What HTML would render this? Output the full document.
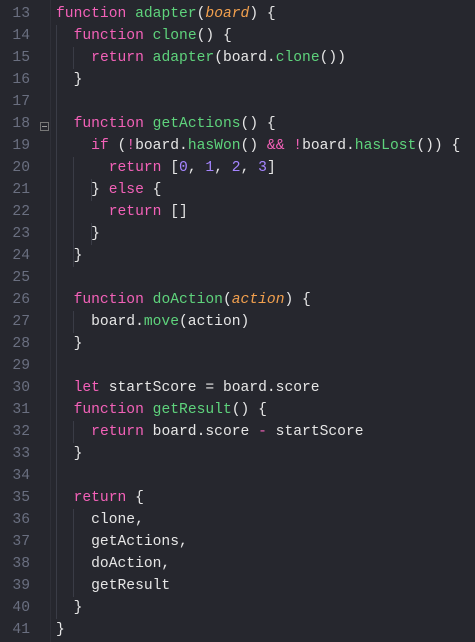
<!DOCTYPE html>
<html><head><style>
body{margin:0;background:#26272e;width:475px;height:642px;overflow:hidden;position:relative;font-family:"Liberation Mono",monospace;font-size:14.65px;color:#e6e6e6}
.l{position:absolute;left:0;height:22px;line-height:22px;white-space:pre}
.n{position:absolute;left:0;width:30px;text-align:right;color:#6a6f80}
.c{position:absolute;left:56px}
.g{position:absolute;width:1px;background:#3a3c46}
.k{color:#f361b8}.f{color:#5ed37c}.p{color:#f2a04e;font-style:italic}.d{color:#a585ff}
.fold{position:absolute;left:40px;top:122px;width:7px;height:7px;border:1px solid #777;font-size:0}
.fold:after{content:"";position:absolute;left:1px;top:3px;width:5px;height:1px;background:#999}
</style></head><body>
<div class="g" style="left:50px;top:0;height:642px;background:#2f3038"></div>
<div class="g" style="left:56px;top:25px;height:594px"></div>
<div class="g" style="left:73px;top:47px;height:22px"></div>
<div class="g" style="left:73px;top:157px;height:110px"></div>
<div class="g" style="left:91px;top:179px;height:22px"></div>
<div class="g" style="left:91px;top:223px;height:22px"></div>
<div class="g" style="left:73px;top:311px;height:22px"></div>
<div class="g" style="left:73px;top:421px;height:22px"></div>
<div class="g" style="left:73px;top:509px;height:88px"></div>
<div class="fold"></div>
<div class="l" style="top:3px"><span class="n">13</span><span class="c"><span class="k">function</span> <span class="f">adapter</span>(<span class="p">board</span>) {</span></div>
<div class="l" style="top:25px"><span class="n">14</span><span class="c">  <span class="k">function</span> <span class="f">clone</span>() {</span></div>
<div class="l" style="top:47px"><span class="n">15</span><span class="c">    <span class="k">return</span> <span class="f">adapter</span>(board.<span class="f">clone</span>())</span></div>
<div class="l" style="top:69px"><span class="n">16</span><span class="c">  }</span></div>
<div class="l" style="top:91px"><span class="n">17</span></div>
<div class="l" style="top:113px"><span class="n">18</span><span class="c">  <span class="k">function</span> <span class="f">getActions</span>() {</span></div>
<div class="l" style="top:135px"><span class="n">19</span><span class="c">    <span class="k">if</span> (<span class="k">!</span>board.<span class="f">hasWon</span>() <span class="k">&amp;&amp;</span> <span class="k">!</span>board.<span class="f">hasLost</span>()) {</span></div>
<div class="l" style="top:157px"><span class="n">20</span><span class="c">      <span class="k">return</span> [<span class="d">0</span>, <span class="d">1</span>, <span class="d">2</span>, <span class="d">3</span>]</span></div>
<div class="l" style="top:179px"><span class="n">21</span><span class="c">    } <span class="k">else</span> {</span></div>
<div class="l" style="top:201px"><span class="n">22</span><span class="c">      <span class="k">return</span> []</span></div>
<div class="l" style="top:223px"><span class="n">23</span><span class="c">    }</span></div>
<div class="l" style="top:245px"><span class="n">24</span><span class="c">  }</span></div>
<div class="l" style="top:267px"><span class="n">25</span></div>
<div class="l" style="top:289px"><span class="n">26</span><span class="c">  <span class="k">function</span> <span class="f">doAction</span>(<span class="p">action</span>) {</span></div>
<div class="l" style="top:311px"><span class="n">27</span><span class="c">    board.<span class="f">move</span>(action)</span></div>
<div class="l" style="top:333px"><span class="n">28</span><span class="c">  }</span></div>
<div class="l" style="top:355px"><span class="n">29</span></div>
<div class="l" style="top:377px"><span class="n">30</span><span class="c">  <span class="k">let</span> startScore = board.score</span></div>
<div class="l" style="top:399px"><span class="n">31</span><span class="c">  <span class="k">function</span> <span class="f">getResult</span>() {</span></div>
<div class="l" style="top:421px"><span class="n">32</span><span class="c">    <span class="k">return</span> board.score <span class="k">-</span> startScore</span></div>
<div class="l" style="top:443px"><span class="n">33</span><span class="c">  }</span></div>
<div class="l" style="top:465px"><span class="n">34</span></div>
<div class="l" style="top:487px"><span class="n">35</span><span class="c">  <span class="k">return</span> {</span></div>
<div class="l" style="top:509px"><span class="n">36</span><span class="c">    clone,</span></div>
<div class="l" style="top:531px"><span class="n">37</span><span class="c">    getActions,</span></div>
<div class="l" style="top:553px"><span class="n">38</span><span class="c">    doAction,</span></div>
<div class="l" style="top:575px"><span class="n">39</span><span class="c">    getResult</span></div>
<div class="l" style="top:597px"><span class="n">40</span><span class="c">  }</span></div>
<div class="l" style="top:619px"><span class="n">41</span><span class="c">}</span></div>
</body></html>
